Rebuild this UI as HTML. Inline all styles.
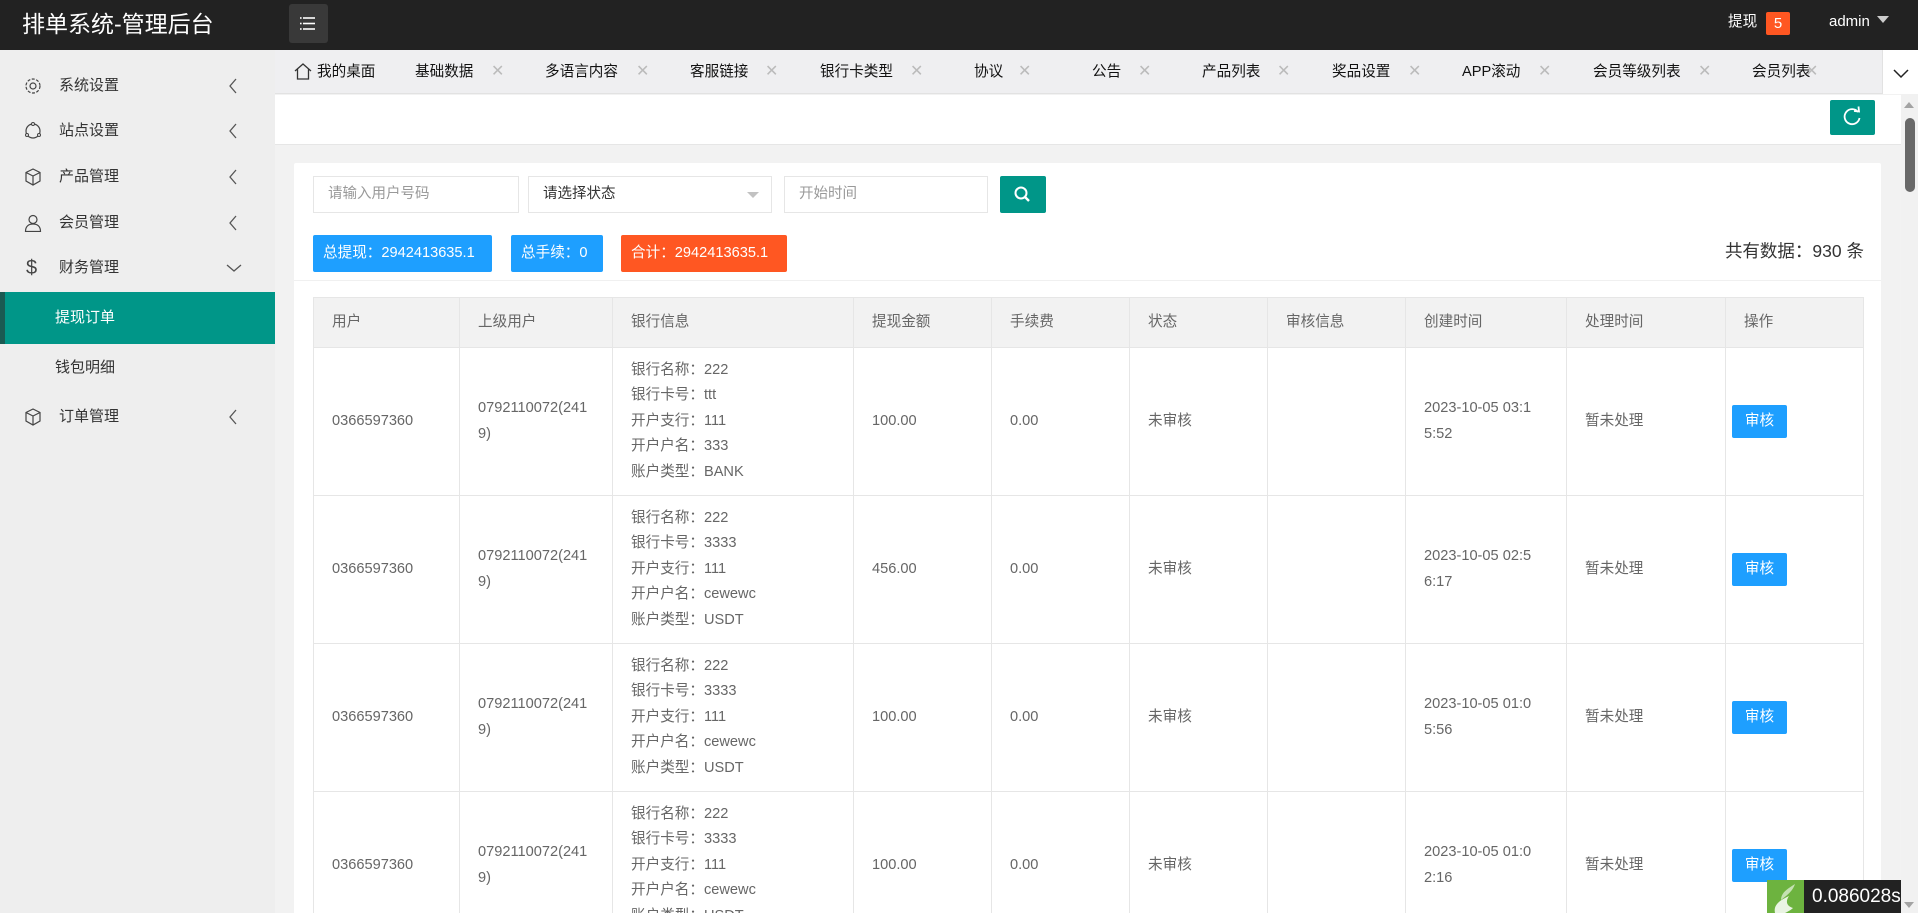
<!DOCTYPE html>
<html><head><meta charset="utf-8"><style>
*{box-sizing:border-box;margin:0;padding:0}
html,body{width:1918px;height:913px;overflow:hidden}
body{background:#f2f2f2;font-family:"Liberation Sans","Noto Sans CJK SC",sans-serif;font-size:14px;color:#333;position:relative}
#wrap{position:absolute;left:0;top:0;width:1918px;height:913px;overflow:hidden}
.a{position:absolute}
#hd{left:0;top:0;width:1918px;height:50px;background:#222}
#logo{left:22px;top:8px;color:#fff;font-size:23px;line-height:32px}
#mb{left:289px;top:4px;width:39px;height:39px;background:#393939;border-radius:3px}
#side{left:0;top:50px;width:275px;height:863px;background:#eee}
.mi{position:absolute;left:0;width:275px;height:46px;line-height:46px;color:#333;font-size:15px}
.mi .ic{position:absolute;left:24px;top:14px;width:18px;height:18px}
.mi .t{position:absolute;left:59px}
.mi .ar{position:absolute;left:228px;top:15px}
#tabs{left:275px;top:50px;width:1643px;height:44px;background:#efeff1;border-bottom:1px solid #e2e2e2}
.tb{position:absolute;top:0;line-height:44px;font-size:14.6px;color:#111}
.x{position:absolute;top:0;line-height:44px;color:#bbb;font-size:16px}
#dd{left:1882px;top:50px;width:36px;height:44px;background:#fff;border-left:1px solid #e2e2e2}
#tool{left:275px;top:95px;width:1626px;height:50px;background:#fff;border-bottom:1px solid #e6e6e6}
#card{left:294px;top:163px;width:1587px;height:760px;background:#fff;border-radius:2px}
.inp{position:absolute;top:176px;height:37px;border:1px solid #e6e6e6;background:#fff;line-height:35px;padding-left:14px;color:#999;font-size:14.5px}
.bd{position:absolute;top:235px;height:37px;line-height:37px;color:#fff;padding:0 10px;font-size:14.6px;border-radius:2px}
table{position:absolute;left:313px;top:297px;border-collapse:collapse;width:1550px;table-layout:fixed}
td,th{border:1px solid #e6e6e6;padding:0 18px;font-size:14.6px;color:#666;font-weight:normal;text-align:left;line-height:25.6px}
th{background:#f2f2f2;height:50px;color:#666}
td{height:148px;background:#fff}
td.op{padding-left:6px}
.btn{display:inline-block;width:55px;height:33px;line-height:33px;text-align:center;background:#1E9FFF;color:#fff;border-radius:2px}
#sb{left:1901px;top:94px;width:17px;height:819px;background:#f1f1f1}
</style></head><body><div id="wrap">
<div id="hd" class="a"></div>
<div id="logo" class="a">排单系统-管理后台</div>
<div id="mb" class="a"><svg width="39" height="39"><g stroke="#fff" stroke-width="1.6"><line x1="14" y1="14" x2="26" y2="14"/><line x1="14" y1="19.5" x2="26" y2="19.5"/><line x1="14" y1="25" x2="26" y2="25"/></g><g fill="#fff"><rect x="11" y="13.2" width="1.6" height="1.6"/><rect x="11" y="18.7" width="1.6" height="1.6"/><rect x="11" y="24.2" width="1.6" height="1.6"/></g></svg></div>
<div class="a" style="left:1728px;top:12px;color:#fff;font-size:14.6px;line-height:20px">提现</div>
<div class="a" style="left:1766px;top:12px;width:24px;height:23px;background:#FF5722;color:#fff;text-align:center;line-height:23px;border-radius:2px;font-size:15px">5</div>
<div class="a" style="left:1829px;top:12px;color:#fff;font-size:15px;line-height:20px">admin</div>
<div class="a" style="left:1877px;top:16px;width:0;height:0;border-left:6px solid transparent;border-right:6px solid transparent;border-top:7px solid #ccc"></div>

<div id="side" class="a">
<div class="mi" style="top:13px"><svg class="ic" viewBox="0 0 18 18"><circle cx="9" cy="9" r="3" fill="none" stroke="#444" stroke-width="1.2"/><circle cx="9" cy="9" r="7" fill="none" stroke="#444" stroke-width="1.2" stroke-dasharray="3 1.5"/></svg><span class="t">系统设置</span><svg class="ar" width="10" height="16"><path d="M8 1L2 8L8 15" fill="none" stroke="#555" stroke-width="1.3"/></svg></div>
<div class="mi" style="top:58px"><svg class="ic" viewBox="0 0 18 18"><circle cx="9" cy="9" r="7" fill="none" stroke="#444" stroke-width="1.2"/><circle cx="9" cy="2" r="1.5" fill="#eee" stroke="#444"/><circle cx="3" cy="13" r="1.5" fill="#eee" stroke="#444"/><circle cx="15" cy="13" r="1.5" fill="#eee" stroke="#444"/></svg><span class="t">站点设置</span><svg class="ar" width="10" height="16"><path d="M8 1L2 8L8 15" fill="none" stroke="#555" stroke-width="1.3"/></svg></div>
<div class="mi" style="top:104px"><svg class="ic" viewBox="0 0 18 18"><path d="M9 1L16 4.5V13L9 17L2 13V4.5Z M2 4.5L9 8L16 4.5 M9 8V17" fill="none" stroke="#444" stroke-width="1.2"/></svg><span class="t">产品管理</span><svg class="ar" width="10" height="16"><path d="M8 1L2 8L8 15" fill="none" stroke="#555" stroke-width="1.3"/></svg></div>
<div class="mi" style="top:150px"><svg class="ic" viewBox="0 0 18 18"><circle cx="9" cy="5.5" r="4" fill="none" stroke="#444" stroke-width="1.2"/><path d="M1.5 17.5C1.5 12 5 10 9 10S16.5 12 16.5 17.5Z" fill="none" stroke="#444" stroke-width="1.2"/></svg><span class="t">会员管理</span><svg class="ar" width="10" height="16"><path d="M8 1L2 8L8 15" fill="none" stroke="#555" stroke-width="1.3"/></svg></div>
<div class="mi" style="top:195px"><span class="ic" style="font-size:20px;line-height:18px;color:#444;left:26px">$</span><span class="t">财务管理</span><svg class="ar" style="left:226px;top:18px" width="16" height="10"><path d="M1 2L8 8L15 2" fill="none" stroke="#555" stroke-width="1.3"/></svg></div>
<div class="a" style="left:0;top:242px;width:275px;height:52px;background:#009688;border-left:5px solid #1a5a52"></div>
<div class="a" style="left:55px;top:242px;line-height:52px;color:#fff;font-size:15px">提现订单</div>
<div class="a" style="left:55px;top:295px;line-height:46px;color:#333;font-size:15px">钱包明细</div>
<div class="mi" style="top:344px"><svg class="ic" viewBox="0 0 18 18"><path d="M9 1L16 4.5V13L9 17L2 13V4.5Z M2 4.5L9 8L16 4.5 M9 8V17" fill="none" stroke="#444" stroke-width="1.2"/></svg><span class="t">订单管理</span><svg class="ar" width="10" height="16"><path d="M8 1L2 8L8 15" fill="none" stroke="#555" stroke-width="1.3"/></svg></div>
</div>

<div id="tabs" class="a">
<svg class="a" style="left:19px;top:13px" width="18" height="17" viewBox="0 0 18 17"><path d="M1 8L9 1L17 8 M3.5 6V16H14.5V6" fill="none" stroke="#333" stroke-width="1.3"/></svg>
<span class="tb" style="left:42px">我的桌面</span>
<span class="tb" style="left:140px">基础数据</span><span class="x" style="left:216px">✕</span>
<span class="tb" style="left:270px">多语言内容</span><span class="x" style="left:361px">✕</span>
<span class="tb" style="left:415px">客服链接</span><span class="x" style="left:490px">✕</span>
<span class="tb" style="left:545px">银行卡类型</span><span class="x" style="left:635px">✕</span>
<span class="tb" style="left:699px">协议</span><span class="x" style="left:743px">✕</span>
<span class="tb" style="left:817px">公告</span><span class="x" style="left:863px">✕</span>
<span class="tb" style="left:927px">产品列表</span><span class="x" style="left:1002px">✕</span>
<span class="tb" style="left:1057px">奖品设置</span><span class="x" style="left:1133px">✕</span>
<span class="tb" style="left:1187px">APP滚动</span><span class="x" style="left:1263px">✕</span>
<span class="tb" style="left:1318px">会员等级列表</span><span class="x" style="left:1423px">✕</span>
<span class="tb" style="left:1477px">会员列表</span><span class="x" style="left:1530px">✕</span>
</div>
<div id="dd" class="a"><svg width="36" height="44"><path d="M11 20L18 27L25 20" fill="none" stroke="#222" stroke-width="1.5"/></svg></div>

<div id="tool" class="a"></div>
<div class="a" style="left:1830px;top:100px;width:45px;height:35px;background:#009688;border-radius:2px"><svg width="45" height="35"><path d="M28 12A7.5 7.5 0 1 0 29.5 18" fill="none" stroke="#fff" stroke-width="1.8"/><path d="M24 11L29 11.5L28.5 6.5" fill="none" stroke="#fff" stroke-width="1.8"/></svg></div>

<div id="card" class="a"></div>
<div class="inp" style="left:313px;width:206px">请输入用户号码</div>
<div class="inp" style="left:528px;width:244px;color:#333">请选择状态<span style="position:absolute;right:12px;top:15px;border-left:6px solid transparent;border-right:6px solid transparent;border-top:6px solid #c2c2c2"></span></div>
<div class="inp" style="left:784px;width:204px">开始时间</div>
<div class="a" style="left:1000px;top:176px;width:46px;height:37px;background:#009688;border-radius:2px"><svg width="46" height="37"><circle cx="21" cy="17" r="5.5" fill="none" stroke="#fff" stroke-width="2"/><line x1="25" y1="21" x2="29" y2="25" stroke="#fff" stroke-width="2.4"/></svg></div>
<div class="bd" style="left:313px;width:179px;background:#1E9FFF">总提现：2942413635.1</div>
<div class="bd" style="left:511px;width:92px;background:#1E9FFF">总手续：0</div>
<div class="bd" style="left:621px;width:166px;background:#FF5722">合计：2942413635.1</div>
<div class="a" style="left:1700px;top:238px;width:164px;text-align:right;font-size:17.5px;color:#333;line-height:26px">共有数据：930 条</div>
<div class="a" style="left:294px;top:280px;width:1587px;height:1px;background:#f0f0f0"></div>

<table>
<colgroup><col style="width:146px"><col style="width:153px"><col style="width:241px"><col style="width:138px"><col style="width:138px"><col style="width:138px"><col style="width:138px"><col style="width:161px"><col style="width:159px"><col style="width:138px"></colgroup>
<tr><th>用户</th><th>上级用户</th><th>银行信息</th><th>提现金额</th><th>手续费</th><th>状态</th><th>审核信息</th><th>创建时间</th><th>处理时间</th><th>操作</th></tr>
<tr><td>0366597360</td><td>0792110072(241<br>9)</td><td>银行名称：222<br>银行卡号：ttt<br>开户支行：111<br>开户户名：333<br>账户类型：BANK</td><td>100.00</td><td>0.00</td><td>未审核</td><td></td><td>2023-10-05 03:1<br>5:52</td><td>暂未处理</td><td class="op"><span class="btn">审核</span></td></tr>
<tr><td>0366597360</td><td>0792110072(241<br>9)</td><td>银行名称：222<br>银行卡号：3333<br>开户支行：111<br>开户户名：cewewc<br>账户类型：USDT</td><td>456.00</td><td>0.00</td><td>未审核</td><td></td><td>2023-10-05 02:5<br>6:17</td><td>暂未处理</td><td class="op"><span class="btn">审核</span></td></tr>
<tr><td>0366597360</td><td>0792110072(241<br>9)</td><td>银行名称：222<br>银行卡号：3333<br>开户支行：111<br>开户户名：cewewc<br>账户类型：USDT</td><td>100.00</td><td>0.00</td><td>未审核</td><td></td><td>2023-10-05 01:0<br>5:56</td><td>暂未处理</td><td class="op"><span class="btn">审核</span></td></tr>
<tr><td>0366597360</td><td>0792110072(241<br>9)</td><td>银行名称：222<br>银行卡号：3333<br>开户支行：111<br>开户户名：cewewc<br>账户类型：USDT</td><td>100.00</td><td>0.00</td><td>未审核</td><td></td><td>2023-10-05 01:0<br>2:16</td><td>暂未处理</td><td class="op"><span class="btn">审核</span></td></tr>
</table>

<div id="sb" class="a"></div>
<div class="a" style="left:1904px;top:102px;border-left:5px solid transparent;border-right:5px solid transparent;border-bottom:6px solid #a3a3a3"></div>
<div class="a" style="left:1905px;top:118px;width:10px;height:74px;background:#686868;border-radius:5px"></div>
<div class="a" style="left:1904px;top:902px;border-left:5px solid transparent;border-right:5px solid transparent;border-top:6px solid #a3a3a3"></div>

<div class="a" style="left:1767px;top:880px;width:37px;height:33px;background:#6db33f"><svg width="37" height="33"><path d="M8 33C6 24 14 20 22 16C18 22 20 26 26 28C24 30 20 32 18 33Z" fill="#fff" opacity=".85"/><path d="M14 20C14 12 22 8 28 4C26 10 22 14 14 20Z" fill="#fff" opacity=".6"/></svg></div>
<div class="a" style="left:1804px;top:880px;width:97px;height:33px;background:#222;color:#fff;font-size:19px;line-height:33px;padding-left:8px">0.086028s</div>
</div></body></html>
